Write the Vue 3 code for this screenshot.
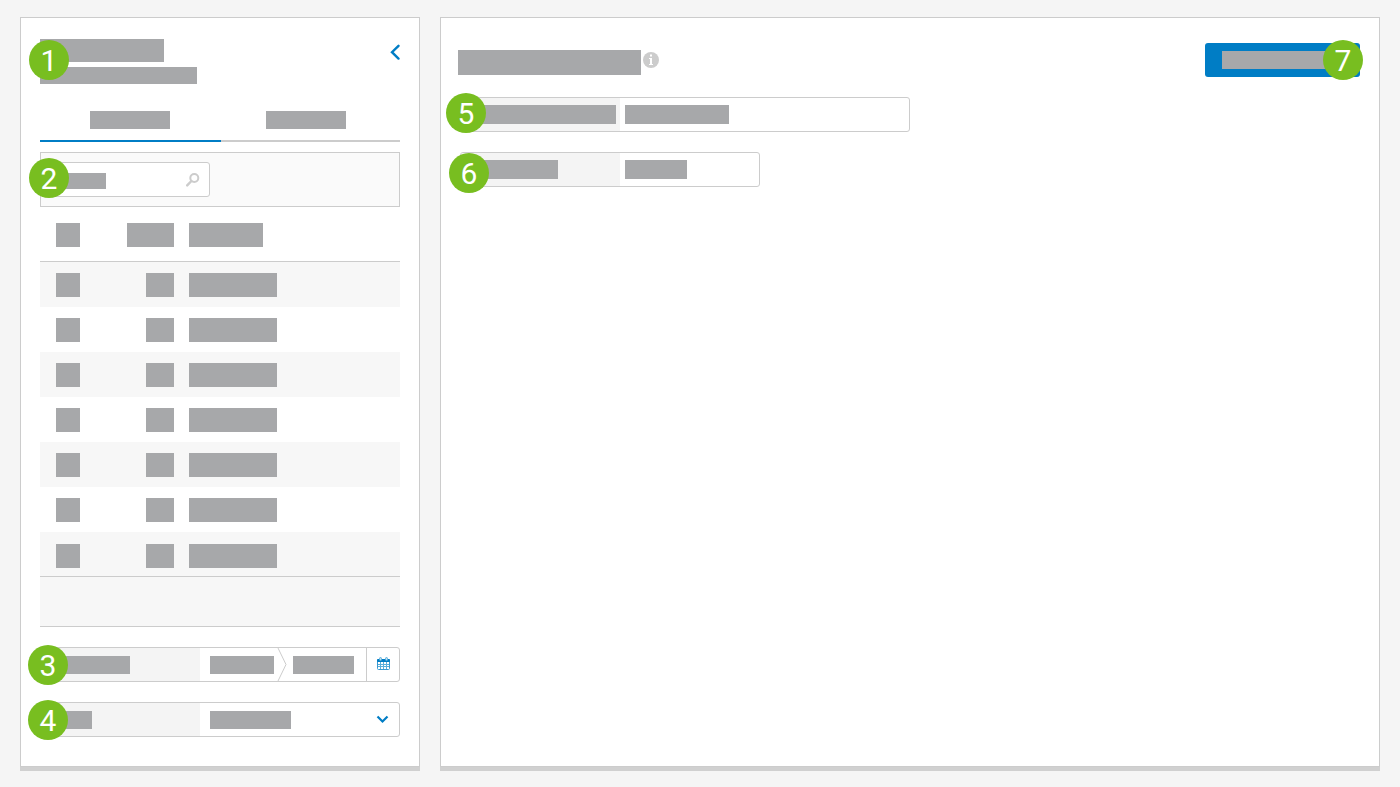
<script setup>
import { ref } from 'vue'

const activeTab = ref(0)
const search = ref('')
const rows = ref(Array.from({ length: 7 }, (_, i) => ({ id: i + 1, checked: false })))

const toggleAll = (event) => {
  rows.value.forEach((row) => {
    row.checked = event.target.checked
  })
}
</script>

<template>
  <main class="page">
    <aside class="panel side">
      <header class="side-header">
        <div class="titles">
          <span class="bar title"></span>
          <span class="bar subtitle"></span>
          <span class="badge b1">1</span>
        </div>
        <button class="collapse" type="button" aria-label="Collapse">
          <svg width="11" height="18" viewBox="0 0 11 18">
            <path
              d="M9.5 2.8 3 9.2l6.5 6.4"
              fill="none"
              stroke="#007dc5"
              stroke-width="2.4"
              stroke-linecap="round"
            />
          </svg>
        </button>
      </header>

      <nav class="tabs">
        <button
          v-for="n in 2"
          :key="n"
          type="button"
          class="tab"
          :class="{ active: activeTab === n - 1 }"
          :aria-label="'Tab ' + n"
          @click="activeTab = n - 1"
        >
          <span class="bar"></span>
        </button>
      </nav>

      <div class="toolbar">
        <div class="search">
          <span class="bar"></span>
          <svg width="14" height="14" viewBox="0 0 14 14">
            <circle cx="8.3" cy="5" r="4" fill="none" stroke="#ccc" stroke-width="2" />
            <path d="M5.4 8 1.2 12.4" stroke="#ccc" stroke-width="2.4" stroke-linecap="round" />
          </svg>
          <input v-model="search" class="cover" type="text" aria-label="Search" />
        </div>
        <span class="badge b2">2</span>
      </div>

      <table class="list">
        <thead>
          <tr>
            <th class="check"><input type="checkbox" aria-label="Select all" @change="toggleAll" /></th>
            <th class="number"><span class="bar"></span></th>
            <th class="name"><span class="bar"></span></th>
          </tr>
        </thead>
        <tbody>
          <tr v-for="row in rows" :key="row.id">
            <td class="check">
              <input v-model="row.checked" type="checkbox" :aria-label="'Select row ' + row.id" />
            </td>
            <td class="number"><span class="bar"></span></td>
            <td class="name"><span class="bar"></span></td>
          </tr>
        </tbody>
      </table>
      <div class="list-footer"></div>

      <div class="field">
        <label class="field-label" for="date-from"><span class="bar period"></span></label>
        <div class="range">
          <input id="date-from" class="bar from" type="text" aria-label="From" />
          <svg class="separator" width="10" height="33" viewBox="0 0 10 33">
            <path d="M1 0 9 16.5 1 33" fill="none" stroke="#ccc" />
          </svg>
          <input class="bar to" type="text" aria-label="To" />
        </div>
        <button class="calendar" type="button" aria-label="Open calendar">
          <svg width="13" height="13" viewBox="0 0 13 13">
            <rect x="0.5" y="2.5" width="12" height="10" rx="1" fill="#fff" stroke="#3a9ad2" />
            <rect x="0" y="2" width="13" height="3" rx="1" fill="#007dc5" />
            <path d="M3.5 5v7M6.5 5v7M9.5 5v7M1 7.5h11M1 9.5h11" stroke="#5aaedb" />
            <rect x="2.5" y="0.5" width="2" height="3" rx="1" fill="#b5dbf0" stroke="#5aaedb" />
            <rect x="8.5" y="0.5" width="2" height="3" rx="1" fill="#b5dbf0" stroke="#5aaedb" />
          </svg>
        </button>
        <span class="badge b3">3</span>
      </div>

      <div class="field">
        <label class="field-label" for="kind"><span class="bar kind"></span></label>
        <div class="control select">
          <span class="bar kind-value"></span>
          <svg width="13" height="9" viewBox="0 0 13 9">
            <path d="M1.5 1.5 6.5 6.5l5-5" fill="none" stroke="#007dc5" stroke-width="2.2" />
          </svg>
          <select id="kind" class="cover"></select>
        </div>
        <span class="badge b3">4</span>
      </div>
    </aside>

    <section class="panel content">
      <header class="content-header">
        <span class="bar heading"></span>
        <svg class="info" width="16" height="16" viewBox="0 0 16 16">
          <circle cx="8" cy="8" r="8" fill="#ccc" />
          <path d="M7 2.5h2v2H7zM6 6h3v6h1v1H6v-1h1V7H6z" fill="#fff" />
        </svg>
        <button class="action" type="button" aria-label="Save">
          <span class="bar"></span>
          <span class="badge b7">7</span>
        </button>
      </header>

      <form class="form" @submit.prevent>
        <div class="field wide">
          <label class="field-label" for="first"><span class="bar first"></span></label>
          <div class="control">
            <span class="bar first-value"></span>
            <input id="first" class="cover" type="text" />
          </div>
          <span class="badge b5">5</span>
        </div>
        <div class="field narrow">
          <label class="field-label" for="second"><span class="bar second"></span></label>
          <div class="control">
            <span class="bar second-value"></span>
            <input id="second" class="cover" type="text" />
          </div>
          <span class="badge b6">6</span>
        </div>
      </form>
    </section>
  </main>
</template>

<style>
body {
  background: #f5f5f5;
}
</style>

<style scoped>
* {
  box-sizing: border-box;
}
.page {
  display: grid;
  grid-template-columns: 400px 1fr;
  gap: 20px;
  min-height: 100vh;
  padding: 17px 20px 20px;
  font-family: Roboto, Arial, sans-serif;
}
button {
  padding: 0;
  border: 0;
  background: none;
  font-family: inherit;
  cursor: pointer;
}
svg {
  display: block;
}
.panel {
  border: 1px solid #ccc;
  background: #fff;
  box-shadow: 0 4px 0 #d0d0d0;
}
.side {
  padding: 21px 19px;
}
.bar {
  display: block;
  height: 18px;
  padding: 0;
  border: 0;
  background: #a7a8aa;
}
.badge {
  position: absolute;
  width: 40px;
  height: 40px;
  border-radius: 50%;
  background: #78be20;
  color: #fff;
  font-size: 30px;
  line-height: 42px;
  text-align: center;
}
.b1 {
  top: 1px;
  left: -11px;
}
.b2 {
  top: 5px;
  left: -12px;
}
.b3 {
  top: -3px;
  left: -13px;
}
.b5 {
  top: -5px;
  left: -15px;
}
.b6 {
  top: 0;
  left: -12px;
}
.b7 {
  top: -3px;
  right: -3px;
}
.cover {
  position: absolute;
  inset: 0;
  width: 100%;
  height: 100%;
  padding: 0 10px;
  border: 0;
  background: transparent;
  appearance: none;
}

/* left panel */
.side-header {
  display: flex;
  justify-content: space-between;
  align-items: flex-start;
}
.titles {
  position: relative;
}
.title {
  width: 124px;
  height: 23px;
  margin-bottom: 5px;
}
.subtitle {
  width: 157px;
  height: 17px;
}
.collapse {
  margin-top: 4px;
}
.tabs {
  display: grid;
  grid-template-columns: 181px 1fr;
  margin: 27px 0 10px;
}
.tab {
  display: flex;
  justify-content: center;
  padding: 0 1px 11px 0;
  border-bottom: 2px solid #ccc;
}
.tab + .tab {
  padding-right: 9px;
}
.tab.active {
  border-color: #007dc5;
}
.tab .bar {
  width: 80px;
}
.toolbar {
  position: relative;
  padding: 9px;
  border: 1px solid #ccc;
  background: #fafafa;
}
.search {
  position: relative;
  display: flex;
  justify-content: space-between;
  align-items: flex-start;
  width: 160px;
  height: 35px;
  padding: 10px 9px 0;
  border: 1px solid #ccc;
  border-radius: 3px;
  background: #fff;
}
.search .bar {
  width: 46px;
  height: 16px;
}
.list {
  width: 100%;
  table-layout: fixed;
  border-collapse: separate;
  border-spacing: 0;
}
.list th,
.list td {
  height: 45px;
  padding: 0;
  vertical-align: middle;
}
.list th {
  height: 55px;
  padding-top: 2px;
  border-bottom: 1px solid #ccc;
}
.list tbody tr:nth-child(odd) {
  background: #f7f7f7;
}
.list tbody tr:last-child td {
  padding-top: 3px;
  border-bottom: 1px solid #ccc;
}
.list .check {
  width: 56px;
  padding-left: 16px;
}
.list .number {
  width: 78px;
}
.list .name {
  padding-left: 15px;
}
.list .bar,
.list input {
  height: 24px;
}
.list input {
  display: block;
  width: 24px;
  margin: 0;
  background: #a7a8aa;
  appearance: none;
}
.list input:checked {
  background: #007dc5;
}
.number .bar {
  width: 28px;
  margin-left: auto;
}
.name .bar {
  width: 88px;
}
th.number .bar {
  width: 47px;
}
th.name .bar {
  width: 74px;
}
.list-footer {
  height: 50px;
  border-bottom: 1px solid #ccc;
  background: #f7f7f7;
}

/* fields */
.field {
  position: relative;
  display: flex;
  height: 35px;
  margin-top: 20px;
  border: 1px solid #ccc;
  border-radius: 3px;
  background: #fff;
}
.field-label {
  display: flex;
  align-items: center;
  flex: 0 0 159px;
  padding-left: 9px;
  border-radius: 2px 0 0 2px;
  background: #f4f4f4;
}
.control {
  position: relative;
  display: flex;
  flex: 1;
  align-items: center;
  padding: 0 5px;
}
.control.select {
  justify-content: space-between;
  padding: 0 10px;
}
.range {
  display: flex;
  flex: 1;
  align-items: center;
  padding-left: 10px;
}
.separator {
  margin: 0 6px 0 3px;
}
.calendar {
  display: flex;
  justify-content: center;
  align-items: center;
  width: 33px;
  padding-bottom: 2px;
  border-left: 1px solid #ccc;
}
.period {
  width: 80px;
}
.from {
  width: 64px;
}
.to {
  width: 61px;
}
.kind {
  width: 42px;
}
.kind-value {
  width: 81px;
}

/* right panel */
.content-header {
  display: flex;
  align-items: flex-start;
  padding: 25px 19px 20px 17px;
}
.heading {
  width: 183px;
  height: 25px;
  margin-top: 7px;
}
.info {
  margin: 9px 0 0 2px;
}
.action {
  position: relative;
  width: 155px;
  height: 34px;
  margin-left: auto;
  padding: 0 17px;
  border-radius: 3px;
  background: #007dc5;
}
.form {
  padding: 0 19px;
}
.form .field {
  max-width: 100%;
  margin: 0 0 20px;
}
.form .bar {
  height: 19px;
}
.wide {
  width: 450px;
}
.narrow {
  width: 300px;
}
.first {
  width: 146px;
}
.first-value {
  width: 104px;
}
.second {
  width: 88px;
}
.second-value {
  width: 62px;
}
</style>
